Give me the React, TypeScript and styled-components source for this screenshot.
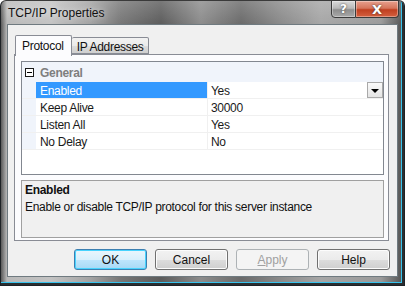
import React from 'react';
import styled, {createGlobalStyle} from 'styled-components';

const GlobalStyle = createGlobalStyle`
  html, body {
    margin: 0;
    padding: 0;
    background: #ffffff;
  }
  body {
    font-family: "Liberation Sans", Arial, sans-serif;
    font-size: 12px;
    letter-spacing: -0.3px;
    color: #000;
  }
`;

const Window = styled.div`
  width: 405px;
  height: 286px;
  box-sizing: border-box;
  display: flex;
  flex-direction: column;
  padding: 0 6px 8px 6px;
  border: 1px solid #1e2226;
  border-top-color: #3a3a3a;
  border-radius: 6px 6px 0 0;
  background:
    linear-gradient(180deg, rgba(255,255,255,0.18) 0%, rgba(255,255,255,0) 24px),
    linear-gradient(90deg, #5a5a5a 0px, #b9b9b9 6px, #c3c3c3 50px, #a2a2a2 90px, #767676 120px, #5c5c5c 160px, #8c8c8c 200px, #6a6a6a 240px, #8a8a8a 280px, #a6a6a6 320px, #9a9a9a 380px, #4a4a4a 404px);
  box-shadow: inset -2px -2px 0 #2a2e30, inset -3px -3px 0 #38c4ee;
  overflow: hidden;
`;

const TitleBar = styled.div`
  height: 23px;
  display: flex;
  align-items: flex-start;
  justify-content: space-between;
`;

const Title = styled.div`
  padding: 5px 0 0 1px;
  font-size: 12px;
  letter-spacing: 0;
  color: #111;
  text-shadow: 0 0 6px rgba(255,255,255,0.8);
`;

const CaptionButtons = styled.div`
  display: flex;
  margin-right: -1px;
  margin-top: -1px;
`;

const CaptionButton = styled.div<{$close?: boolean}>`
  width: ${p => (p.$close ? 43 : 25)}px;
  height: 18px;
  box-sizing: border-box;
  display: flex;
  align-items: center;
  justify-content: center;
  border: 1px solid #3b3b3b;
  border-left-width: ${p => (p.$close ? 0 : 1)}px;
  border-radius: ${p => (p.$close ? '0 0 4px 0' : '0 0 0 4px')};
  background: ${p => p.$close
    ? 'linear-gradient(180deg, #e7a08e 0%, #d5755c 45%, #c03f20 55%, #d4603f 100%)'
    : 'linear-gradient(180deg, #dadada 0%, #b8b8b8 45%, #8e8e8e 55%, #a9a9a9 100%)'};
  box-shadow: inset 0 0 0 1px rgba(255,255,255,0.35);
  color: #fff;
  font-family: "DejaVu Sans", sans-serif;
  font-weight: bold;
  letter-spacing: 0;
  font-size: ${p => (p.$close ? 13 : 12)}px;
  text-shadow: 0 0 2px #333;
`;

const Client = styled.div`
  flex: 1;
  display: flex;
  flex-direction: column;
  border: 1px solid #6f7a80;
  background: #f0f0f0;
  padding: 10px 8px 0 6px;
`;

const TabStrip = styled.div`
  display: flex;
  align-items: flex-end;
  padding-left: 1px;
  height: 19px;
  position: relative;
  z-index: 1;
`;

const Tab = styled.div<{$active?: boolean}>`
  box-sizing: border-box;
  height: ${p => (p.$active ? 21 : 17)}px;
  margin-bottom: ${p => (p.$active ? -2 : 0)}px;
  padding: ${p => (p.$active ? '3px 7px 0 6px' : '2px 4px 0 5px')};
  border: 1px solid #898c95;
  border-bottom: ${p => (p.$active ? 'none' : '1px solid #898c95')};
  border-left-width: ${p => (p.$active ? 1 : 0)}px;
  border-radius: 2px 2px 0 0;
  background: ${p => (p.$active ? '#fcfcfe' : 'linear-gradient(180deg, #f2f2f2 0%, #ebebeb 50%, #dddddd 51%, #cfcfcf 100%)')};
  color: #111;
  white-space: nowrap;
`;

const TabPanel = styled.div`
  height: 187px;
  box-sizing: border-box;
  border: 1px solid #898c95;
  background: #fcfcfe;
  padding: 6px 4px 1px 6px;
  display: flex;
  flex-direction: column;
  gap: 5px;
`;

const Grid = styled.div`
  height: 114px;
  box-sizing: border-box;
  border: 1px solid #828790;
  background: #fff;
  display: flex;
  flex-direction: column;
`;

const Row = styled.div<{$category?: boolean}>`
  display: flex;
  height: ${p => (p.$category ? 19 : 16)}px;
  border-bottom: 1px solid ${p => (p.$category ? '#f0f4fb' : '#f0f0f0')};
  background: ${p => (p.$category ? '#f0f4fb' : '#fff')};
`;

const Gutter = styled.div`
  width: 13px;
  flex: none;
  background: #f0f4fb;
  display: flex;
  align-items: center;
  justify-content: center;
  padding-left: 1px;
`;

const MinusBox = styled.div`
  width: 9px;
  height: 9px;
  box-sizing: border-box;
  border: 1px solid #1a1a1a;
  background: #fff;
  display: flex;
  align-items: center;
  justify-content: center;
  margin-top: 1px;
  &::after {
    content: '';
    width: 5px;
    height: 1px;
    background: #000;
  }
`;

const CategoryLabel = styled.div`
  padding: 4px 0 0 4px;
  font-weight: bold;
  color: #7e7e7e;
`;

const NameCell = styled.div<{$selected?: boolean}>`
  width: 172px;
  flex: none;
  box-sizing: border-box;
  padding: 2px 0 0 4px;
  border-right: 1px solid #f0f0f0;
  background: ${p => (p.$selected ? '#3399ff' : '#fff')};
  color: ${p => (p.$selected ? '#fff' : '#1a1a1a')};
`;

const ValueCell = styled.div`
  flex: 1;
  display: flex;
  justify-content: space-between;
  padding: 2px 0 0 3px;
  color: #1a1a1a;
  position: relative;
`;

const DropButton = styled.div`
  position: absolute;
  right: 0;
  top: 0;
  width: 16px;
  height: 16px;
  box-sizing: border-box;
  border: 1px solid #a9a9a9;
  background: linear-gradient(180deg, #fafafa 0%, #e4e4e4 100%);
  display: flex;
  align-items: center;
  justify-content: center;
  &::after {
    content: '';
    border-left: 4px solid transparent;
    border-right: 4px solid transparent;
    border-top: 4px solid #000;
    margin-top: 1px;
  }
`;

const Description = styled.div`
  height: 58px;
  box-sizing: border-box;
  border: 1px solid #a0a0a0;
  background: #f0f0f0;
  padding: 2px 3px;
  color: #111;
`;

const DescTitle = styled.div`
  font-weight: bold;
  height: 16px;
`;

const DescText = styled.div`
  margin-top: 1px;
`;

const ButtonBar = styled.div`
  display: flex;
  justify-content: flex-end;
  gap: 8px;
  padding-top: 8px;
  margin-right: -1px;
`;

const Button = styled.div<{$default?: boolean; $disabled?: boolean}>`
  width: 73px;
  height: 21px;
  box-sizing: border-box;
  display: flex;
  align-items: center;
  justify-content: center;
  border: 1px solid ${p => (p.$default ? '#3c7fb1' : p.$disabled ? '#adb2b5' : '#707070')};
  border-radius: 3px;
  background: ${p => p.$default
    ? 'linear-gradient(180deg, #eaf6fd 0%, #d9f0fc 50%, #bee6fd 51%, #a7d9f5 100%)'
    : p.$disabled
      ? '#f4f4f4'
      : 'linear-gradient(180deg, #f2f2f2 0%, #ebebeb 50%, #dddddd 51%, #cfcfcf 100%)'};
  box-shadow: inset 0 0 0 1px ${p => (p.$default ? '#48d3fe' : p.$disabled ? '#f4f4f4' : '#fcfcfc')};
  color: ${p => (p.$disabled ? '#a0a0a0' : '#111')};
  letter-spacing: 0;
  u {
    text-decoration: underline;
  }
`;

const rows = [
  {name: 'Enabled', value: 'Yes', selected: true},
  {name: 'Keep Alive', value: '30000'},
  {name: 'Listen All', value: 'Yes'},
  {name: 'No Delay', value: 'No'},
];

const App = () => {
  return (
    <>
      <GlobalStyle />
      <Window>
        <TitleBar>
          <Title>TCP/IP Properties</Title>
          <CaptionButtons>
            <CaptionButton>?</CaptionButton>
            <CaptionButton $close>X</CaptionButton>
          </CaptionButtons>
        </TitleBar>
        <Client>
          <TabStrip>
            <Tab $active>Protocol</Tab>
            <Tab>IP Addresses</Tab>
          </TabStrip>
          <TabPanel>
            <Grid>
              <Row $category>
                <Gutter><MinusBox /></Gutter>
                <CategoryLabel>General</CategoryLabel>
              </Row>
              {rows.map(r => (
                <Row key={r.name}>
                  <Gutter />
                  <NameCell $selected={r.selected}>{r.name}</NameCell>
                  <ValueCell>
                    {r.value}
                    {r.selected && <DropButton />}
                  </ValueCell>
                </Row>
              ))}
            </Grid>
            <Description>
              <DescTitle>Enabled</DescTitle>
              <DescText>Enable or disable TCP/IP protocol for this server instance</DescText>
            </Description>
          </TabPanel>
          <ButtonBar>
            <Button $default>OK</Button>
            <Button>Cancel</Button>
            <Button $disabled><span><u>A</u>pply</span></Button>
            <Button>Help</Button>
          </ButtonBar>
        </Client>
      </Window>
    </>
  );
};

export default App;
